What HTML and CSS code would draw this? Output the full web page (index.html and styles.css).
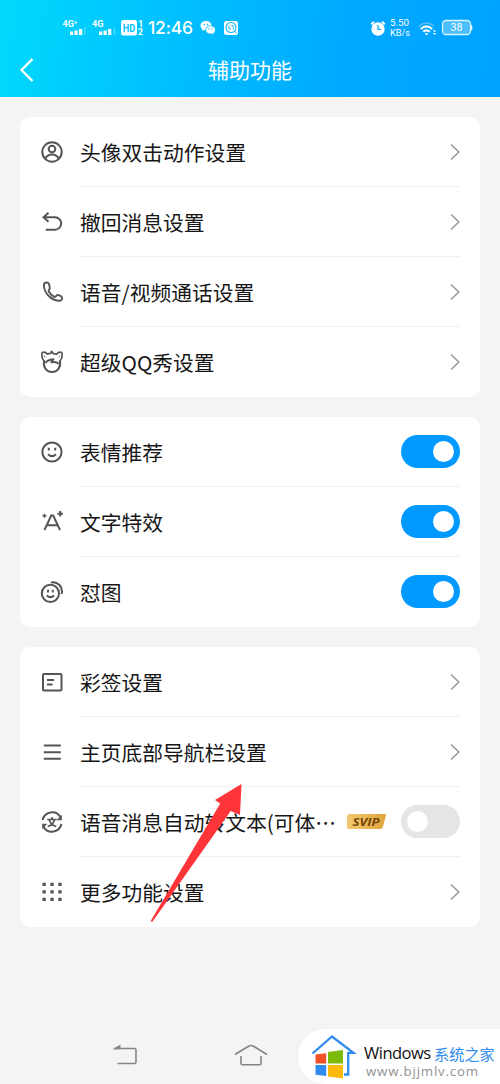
FILE: index.html
```html
<!DOCTYPE html>
<html lang="zh-CN">
<head>
<meta charset="utf-8">
<title>辅助功能</title>
<link rel="stylesheet" href="styles.css">
</head>
<body>
<div class="screen">
  <header class="header">
    <div class="status">
      <svg class="signals" width="82" height="20" viewBox="62 18 82 20" fill="#fff">
        <text class="tiny" x="62.5" y="26.5" textLength="15" lengthAdjust="spacingAndGlyphs">4G⁺</text>
        <path d="M70 31.500h3.200v3.500h-3.200zM74.500 30.500h3.200v4.500h-3.200zM79 29h3.300v6h-3.300z"/><path d="M84 27.500h1.800v7.500h-1.800z" opacity=".25"/>
        <text class="tiny" x="92" y="26.500" textLength="11.500" lengthAdjust="spacingAndGlyphs">4G</text>
        <path d="M99 31.500h3.200v3.500h-3.200zM103.500 30.500h3.200v4.500h-3.200zM108 29h3.300v6h-3.300z"/><path d="M113.500 27.500h1.800v7.500h-1.800z" opacity=".25"/>
        <rect x="121" y="20" width="16" height="15.500" rx="2.500"/>
        <text class="hd" x="122.700" y="31.500" textLength="12.500" lengthAdjust="spacingAndGlyphs">HD</text>
        <text class="tiny" x="138.200" y="26.500">1</text>
        <text class="tiny" x="138" y="35">2</text>
      </svg>
      <span class="time">12:46</span>
      <svg class="chat" width="16" height="16" viewBox="0 0 16 16">
        <path fill="#fff" d="M6 1C2.900 1 .5 3 .5 5.700c0 1.500.8 2.700 2 3.500L2 11l2.200-1c.6.2 1.200.3 1.800.3 3.100 0 5.500-2 5.500-4.600S9.100 1 6 1z"/>
        <path fill="#fff" stroke="#04bfff" stroke-width=".8" d="M10.500 5.800c-2.800 0-4.900 1.800-4.900 4.100s2.100 4.100 4.900 4.100c.6 0 1.100-.1 1.600-.2l2 .9-.4-1.700c1-.7 1.700-1.800 1.700-3.100 0-2.300-2.200-4.100-4.900-4.100z"/>
        <circle cx="4.200" cy="4.600" r=".8" fill="#04bfff"/><circle cx="7.500" cy="4.600" r=".8" fill="#04bfff"/><circle cx="9" cy="9" r=".7" fill="#04bfff"/><circle cx="12" cy="9" r=".7" fill="#04bfff"/>
      </svg>
      <svg class="finder" width="16" height="16" viewBox="0 0 16 16" fill="none" stroke="#08b9ff">
        <rect x="1" y="1" width="14" height="14" rx="2.500" fill="#fff" stroke="none"/>
        <circle cx="8" cy="7.500" r="5" stroke-width="1.100"/><path d="M11.500 11l2 2.300M6 5.500v3.500h1.800M10.200 5.500v4M8.200 5.500h2" stroke-width=".9"/>
      </svg>
      <svg class="alarm" width="16" height="16" viewBox="0 0 16 16" fill="none">
        <circle cx="8" cy="9" r="6.700" fill="#fff"/><path d="M1.200 4.200L4 1.800M14.800 4.200L12 1.800" stroke="#fff" stroke-width="1.800"/><path d="M8 5v4.300h3" stroke="#07adff" stroke-width="1.300"/>
      </svg>
      <div class="speed"><span>5.50</span><span>KB/s</span></div>
      <svg class="wifi" width="20" height="16" viewBox="0 0 20 16" fill="none" stroke="#fff">
        <path d="M1 5.200Q8.500-1.300 16 5.200" opacity=".35" stroke-width="1.500"/><path d="M2.800 8Q8.500 2.800 14.200 8M5.200 10.800Q8.500 8 11.800 10.800" stroke-width="2"/><path d="M6.800 12.500Q8.500 11.500 10.200 12.500L8.500 14.500z" fill="#fff" stroke="none"/><path d="M15 10.500L16.500 8.500 18 10.500zM15 12L16.500 14 18 12z" fill="#fff" stroke="none"/>
      </svg>
      <svg class="battery" width="32" height="18" viewBox="0 0 32 18">
        <rect x="1.500" y="2.500" width="28" height="14" rx="3.500" fill="#fff" fill-opacity=".3" stroke="#d4f5ff" stroke-width="1.300"/><path d="M30 6.500q1.500.3 1.500 3t-1.500 3z" fill="#d4f5ff"/>
        <text class="charge" x="15.500" y="13.200" text-anchor="middle">38</text>
      </svg>
    </div>
    <div class="titlebar">
      <svg class="back" width="16" height="26" viewBox="0 0 16 26" fill="none" stroke="#fff" stroke-width="2.300"><path d="M13.500 2L2.500 13l11 11"/></svg>
      <h1 class="title">辅助功能</h1>
    </div>
  </header>

  <main class="settings">
    <section class="card">
      <div class="row">
        <svg class="icon" viewBox="0 0 24 24"><circle cx="12" cy="12" r="9.700"/><circle cx="12" cy="9" r="3.300"/><path d="M5.300 18.500c1.200-2.600 3.500-4.100 6.700-4.100s5.500 1.500 6.700 4.100"/></svg>
        <div class="body"><span class="label">头像双击动作设置</span><svg class="chevron" viewBox="0 0 10 18"><path d="M1 1.500L8.800 9 1 16.500"/></svg></div>
      </div>
      <div class="row">
        <svg class="icon" viewBox="0 0 24 24"><path d="M8.500 2.800L3.500 7.300l5 4.500M3.800 7.300H15a6 6 0 0 1 0 12.400H5.800"/></svg>
        <div class="body"><span class="label">撤回消息设置</span><svg class="chevron" viewBox="0 0 10 18"><path d="M1 1.500L8.800 9 1 16.500"/></svg></div>
      </div>
      <div class="row">
        <svg class="icon" viewBox="0 0 24 24"><path stroke-width="1.900" d="M6.300 2.500c-1.700.2-2.500 1.200-2.400 3C4.200 13.300 11 20 18.700 20.700c2.200.2 3.500-.8 3.500-2.600 0-1-.4-1.600-1.300-2l-2.400-.9c-.8-.3-1.400-.1-2 .5l-.9.8c-.5.4-1.200.4-1.800.1-1.800-1-3.900-3.100-5-5-.4-.7-.3-1.300.2-1.800.8-.8 1.100-1.400.8-2.300L9 4.100c-.5-1.200-1.400-1.700-2.700-1.600z"/></svg>
        <div class="body"><span class="label">语音/视频通话设置</span><svg class="chevron" viewBox="0 0 10 18"><path d="M1 1.500L8.800 9 1 16.500"/></svg></div>
      </div>
      <div class="row">
        <svg class="icon" viewBox="0 0 24 24" stroke-linejoin="round"><path stroke-width="1.700" d="M4 11C1.800 8.500 1.400 4.500 2.200 2.500 4 1.800 6 2.600 7.500 4.200c1.200-.7 2.200-.9 3.200-.8l.8-2 2 2.200c1.200 0 2.200.2 3 .7C18 2.600 20 1.800 21.800 2.500c.8 2 .4 6-1.800 8.500"/><path d="M4.200 10.200c-1.600 6 1.800 11.800 7.800 11.800s9.400-5.800 7.800-11.800"/><path stroke-width="1.900" d="M5.300 13c1.200-2.200 3.500-3.300 8.200-3.800l-2.200 3c3.200-.5 5.800-.2 7.500 1.600"/><path d="M3.700 5.800l1.500 1.500M20.300 5.800l-1.500 1.500" stroke-width="1"/></svg>
        <div class="body"><span class="label">超级QQ秀设置</span><svg class="chevron" viewBox="0 0 10 18"><path d="M1 1.500L8.800 9 1 16.500"/></svg></div>
      </div>
    </section>

    <section class="card">
      <div class="row">
        <svg class="icon" viewBox="0 0 24 24"><circle cx="12" cy="12" r="9.600"/><path d="M8.800 7.800v2.800M15.200 7.800v2.800M8 14.200q4 3.800 8 0"/></svg>
        <div class="body"><span class="label">表情推荐</span><span class="toggle on"></span></div>
      </div>
      <div class="row">
        <svg class="icon" viewBox="0 0 24 24"><path d="M4.500 20L11.200 5.500h2L20 20M7 15.300h10.500"/><path stroke-width="1.500" d="M4.500 3.800v4M2.500 5.800h4"/><path d="M20.200 1v5.400M17.500 3.700h5.400"/></svg>
        <div class="body"><span class="label">文字特效</span><span class="toggle on"></span></div>
      </div>
      <div class="row">
        <svg class="icon" viewBox="0 0 24 24"><circle cx="10.400" cy="13.400" r="8.600"/><path d="M8 9.800v2.700M12.800 9.800v2.700M6.700 15.500q3.700 3.300 7.400 0"/><path d="M11 2.500c6.500-1.500 12.500 4.500 10.600 11.500"/></svg>
        <div class="body"><span class="label">怼图</span><span class="toggle on"></span></div>
      </div>
    </section>

    <section class="card">
      <div class="row">
        <svg class="icon" viewBox="0 0 24 24"><rect x="3" y="4" width="18.500" height="16.500" rx="1"/><path d="M7 10h7M7 14.500h5.500"/></svg>
        <div class="body"><span class="label">彩签设置</span><svg class="chevron" viewBox="0 0 10 18"><path d="M1 1.500L8.800 9 1 16.500"/></svg></div>
      </div>
      <div class="row">
        <svg class="icon" viewBox="0 0 24 24"><path d="M3.800 5.500h17M3.800 12.200h17M3.800 18.800h17"/></svg>
        <div class="body"><span class="label">主页底部导航栏设置</span><svg class="chevron" viewBox="0 0 10 18"><path d="M1 1.500L8.800 9 1 16.500"/></svg></div>
      </div>
      <div class="row">
        <svg class="icon" viewBox="0 0 24 24"><path d="M2.600 10A9.700 9.700 0 0 1 20.400 7M21.400 14A9.700 9.700 0 0 1 3.600 17"/><path class="solid" d="M21.800 4.800v5.400h-5.200zM2.200 19.200v-5.400h5.200z"/><path stroke-width="1.700" d="M7.300 9.500h9.500M12 7v2.500M14.500 9.500c-.8 3.600-3 6-6.800 7M9.200 9.500c.8 3.600 3.200 6 7 7"/></svg>
        <div class="body"><span class="label">语音消息自动转文本(可体…</span>
          <svg class="svip" width="39" height="15" viewBox="0 0 39 15"><defs><linearGradient id="gold"><stop stop-color="#f3c871"/><stop offset="1" stop-color="#dfa43c"/></linearGradient></defs><path fill="url(#gold)" d="M3 0h35q1.500 0 1 1.500l-3 11q-.7 2.500-3 2.500H1.500Q0 15 0 13.500V3q0-3 3-3z"/><text class="svip-text" x="5.500" y="11.500" textLength="27" lengthAdjust="spacingAndGlyphs">SVIP</text></svg>
          <span class="toggle"></span></div>
      </div>
      <div class="row">
        <svg class="icon" viewBox="0 0 24 24"><path class="solid" d="M2.500 2.800h3.300v3.300H2.500zM10.400 2.800h3.300v3.300h-3.300zM18.300 2.800h3.300v3.300h-3.300zM2.500 10.300h3.300v3.300H2.500zM10.400 10.300h3.300v3.300h-3.300zM18.300 10.300h3.300v3.300h-3.300zM2.500 17.800h3.300v3.300H2.500zM10.400 17.800h3.300v3.300h-3.300zM18.300 17.800h3.300v3.300h-3.300z"/></svg>
        <div class="body"><span class="label">更多功能设置</span><svg class="chevron" viewBox="0 0 10 18"><path d="M1 1.500L8.800 9 1 16.500"/></svg></div>
      </div>
    </section>
  </main>

  <nav class="navbar">
    <svg width="26" height="22" viewBox="0 0 26 22"><path d="M2 4.500h20.500q1.500 0 1.500 1.500v12q0 1.500-1.500 1.500H5.500"/><path class="tip" d="M.5 5.200L8.500.5v4.700z"/></svg>
    <svg width="34" height="22" viewBox="0 0 34 22"><path d="M1 10.500L14.500 2.200q2.500-1.500 5 0L33 10.500M7 12v7q0 1.700 1.700 1.700h16.600Q27 20.700 27 19v-7"/></svg>
  </nav>

  <svg class="pointer" width="94" height="140" viewBox="150 783 94 140"><path fill="#fd3538" d="M241.500 784L215 800l5.200 3.600L150.700 921l1.500 1L230.700 811l9.300 4z"/></svg>

  <div class="brand">
    <svg width="46" height="46" viewBox="311 1034 46 46">
      <path fill="none" stroke="#318bef" stroke-width="2.300" d="M312.500 1053.500L332 1036.500l21.500 16.300h-5.300V1074.500H344"/>
      <path fill="#f05024" d="M315.500 1054.500l10.700-1.300v10.200h-10.700z"/><path fill="#7cbb08" d="M328 1052l15-2v13.400h-15z"/><path fill="#318bef" d="M315.500 1065h10.700v11l-10.700-1.300z"/><path fill="#fdb908" d="M328 1065h15v13.500l-15-2z"/>
    </svg>
    <div class="brand-copy">
      <div class="brand-name"><span class="brand-win">Windows</span><span class="brand-cn">系统之家</span></div>
      <div class="brand-url">www.bjjmlv.com</div>
    </div>
  </div>
</div>
</body>
</html>
```
FILE: styles.css
```css
* { box-sizing: border-box; }
body { margin: 0; font-family: "Noto Sans CJK SC", sans-serif; }
svg { display: block; flex: none; }
.screen { position: relative; width: 500px; height: 1084px; overflow: hidden; background: #f4f4f5; display: flex; flex-direction: column; }

.header { height: 97px; background: linear-gradient(97deg, #00d9fc 0%, #00bdff 38%, #00a8ff 72%, #00a2ff 100%); color: #fff; }
.status { height: 46px; padding: 18px 0 0 62px; display: flex; align-items: flex-start; }
.tiny { font: bold 8.500px Roboto, sans-serif; }
.hd { font: bold 10.500px Roboto, sans-serif; fill: #08c3ff; }
.time { width: 50px; margin-left: 4px; font: 500 17.500px/20px Inter, sans-serif; letter-spacing: -.2px; white-space: nowrap; }
.chat { margin: 2px 0 0 2px; }
.finder { margin: 2px 0 0 7px; }
.alarm { margin: 2px 0 0 131px; }
.speed { width: 22px; margin-left: 4px; display: flex; flex-direction: column; font: 9.800px/10px Roboto, sans-serif; white-space: nowrap; }
.speed span + span { font-size: 9.200px; line-height: 9px; }
.wifi { margin: 3px 0 0 6px; }
.battery { margin-left: 3px; }
.charge { font: 10.500px Roboto, sans-serif; fill: #fff; }
.titlebar { height: 48px; padding: 0 20px; display: grid; grid-template-columns: 16px 1fr 16px; align-items: center; }
.back { margin-left: -1px; }
.title { margin: 0 0 2px; text-align: center; font-size: 21px; line-height: 30px; font-weight: 400; }

.settings { padding: 20px 20px 0; display: flex; flex-direction: column; gap: 20px; }
.card { background: #fff; border-radius: 10px; padding: 0 20px; }
.row { height: 70px; display: flex; gap: 16px; align-items: center; }
.icon { width: 24px; height: 24px; margin-top: -1px; fill: none; stroke: #555557; stroke-width: 2; }
.icon .solid { fill: #555557; stroke: none; }
.body { flex: 1; height: 70px; display: flex; align-items: center; border-bottom: 1px solid #f0f0f1; }
.row:last-child .body { border-bottom-color: transparent; }
.label { flex: 1; font-size: 20.750px; line-height: 30px; color: #161617; white-space: nowrap; }
.chevron { width: 10px; height: 18px; fill: none; stroke: #98989a; stroke-width: 1.500; }
.toggle { width: 59px; height: 33px; padding: 6px; border-radius: 17px; background: #e5e5e5; display: flex; }
.toggle::before { content: ""; width: 21px; height: 21px; border-radius: 50%; background: #fff; }
.toggle.on { background: #0099ff; justify-content: flex-end; }
.svip { margin-right: 15px; }
.svip-text { font: italic bold 11px "Open Sans", sans-serif; fill: #744408; }

.navbar { margin-top: auto; height: 58px; padding: 18px 0 0 112px; display: flex; gap: 96px; }
.navbar svg { fill: none; stroke: #858585; stroke-width: 1.600; }
.navbar .tip { fill: #858585; stroke: none; }

.pointer { position: absolute; left: 150px; top: 783px; }

.brand { position: absolute; left: 298px; top: 1029px; width: 202px; height: 55px; padding: 5px 0 0 13px; background: #fff; border-radius: 27px 0 0 27px; display: flex; gap: 7px; }
.brand-copy { padding-top: 8px; }
.brand-name { display: flex; gap: 4px; line-height: 22px; white-space: nowrap; }
.brand-win { width: 66px; font-family: "Open Sans", sans-serif; font-size: 16.500px; letter-spacing: -.5px; color: #111; }
.brand-cn { font-size: 15.200px; color: #318bef; }
.brand-url { padding-left: 2px; font: 13.300px/14px "Open Sans", sans-serif; letter-spacing: .8px; color: #929292; }
```
